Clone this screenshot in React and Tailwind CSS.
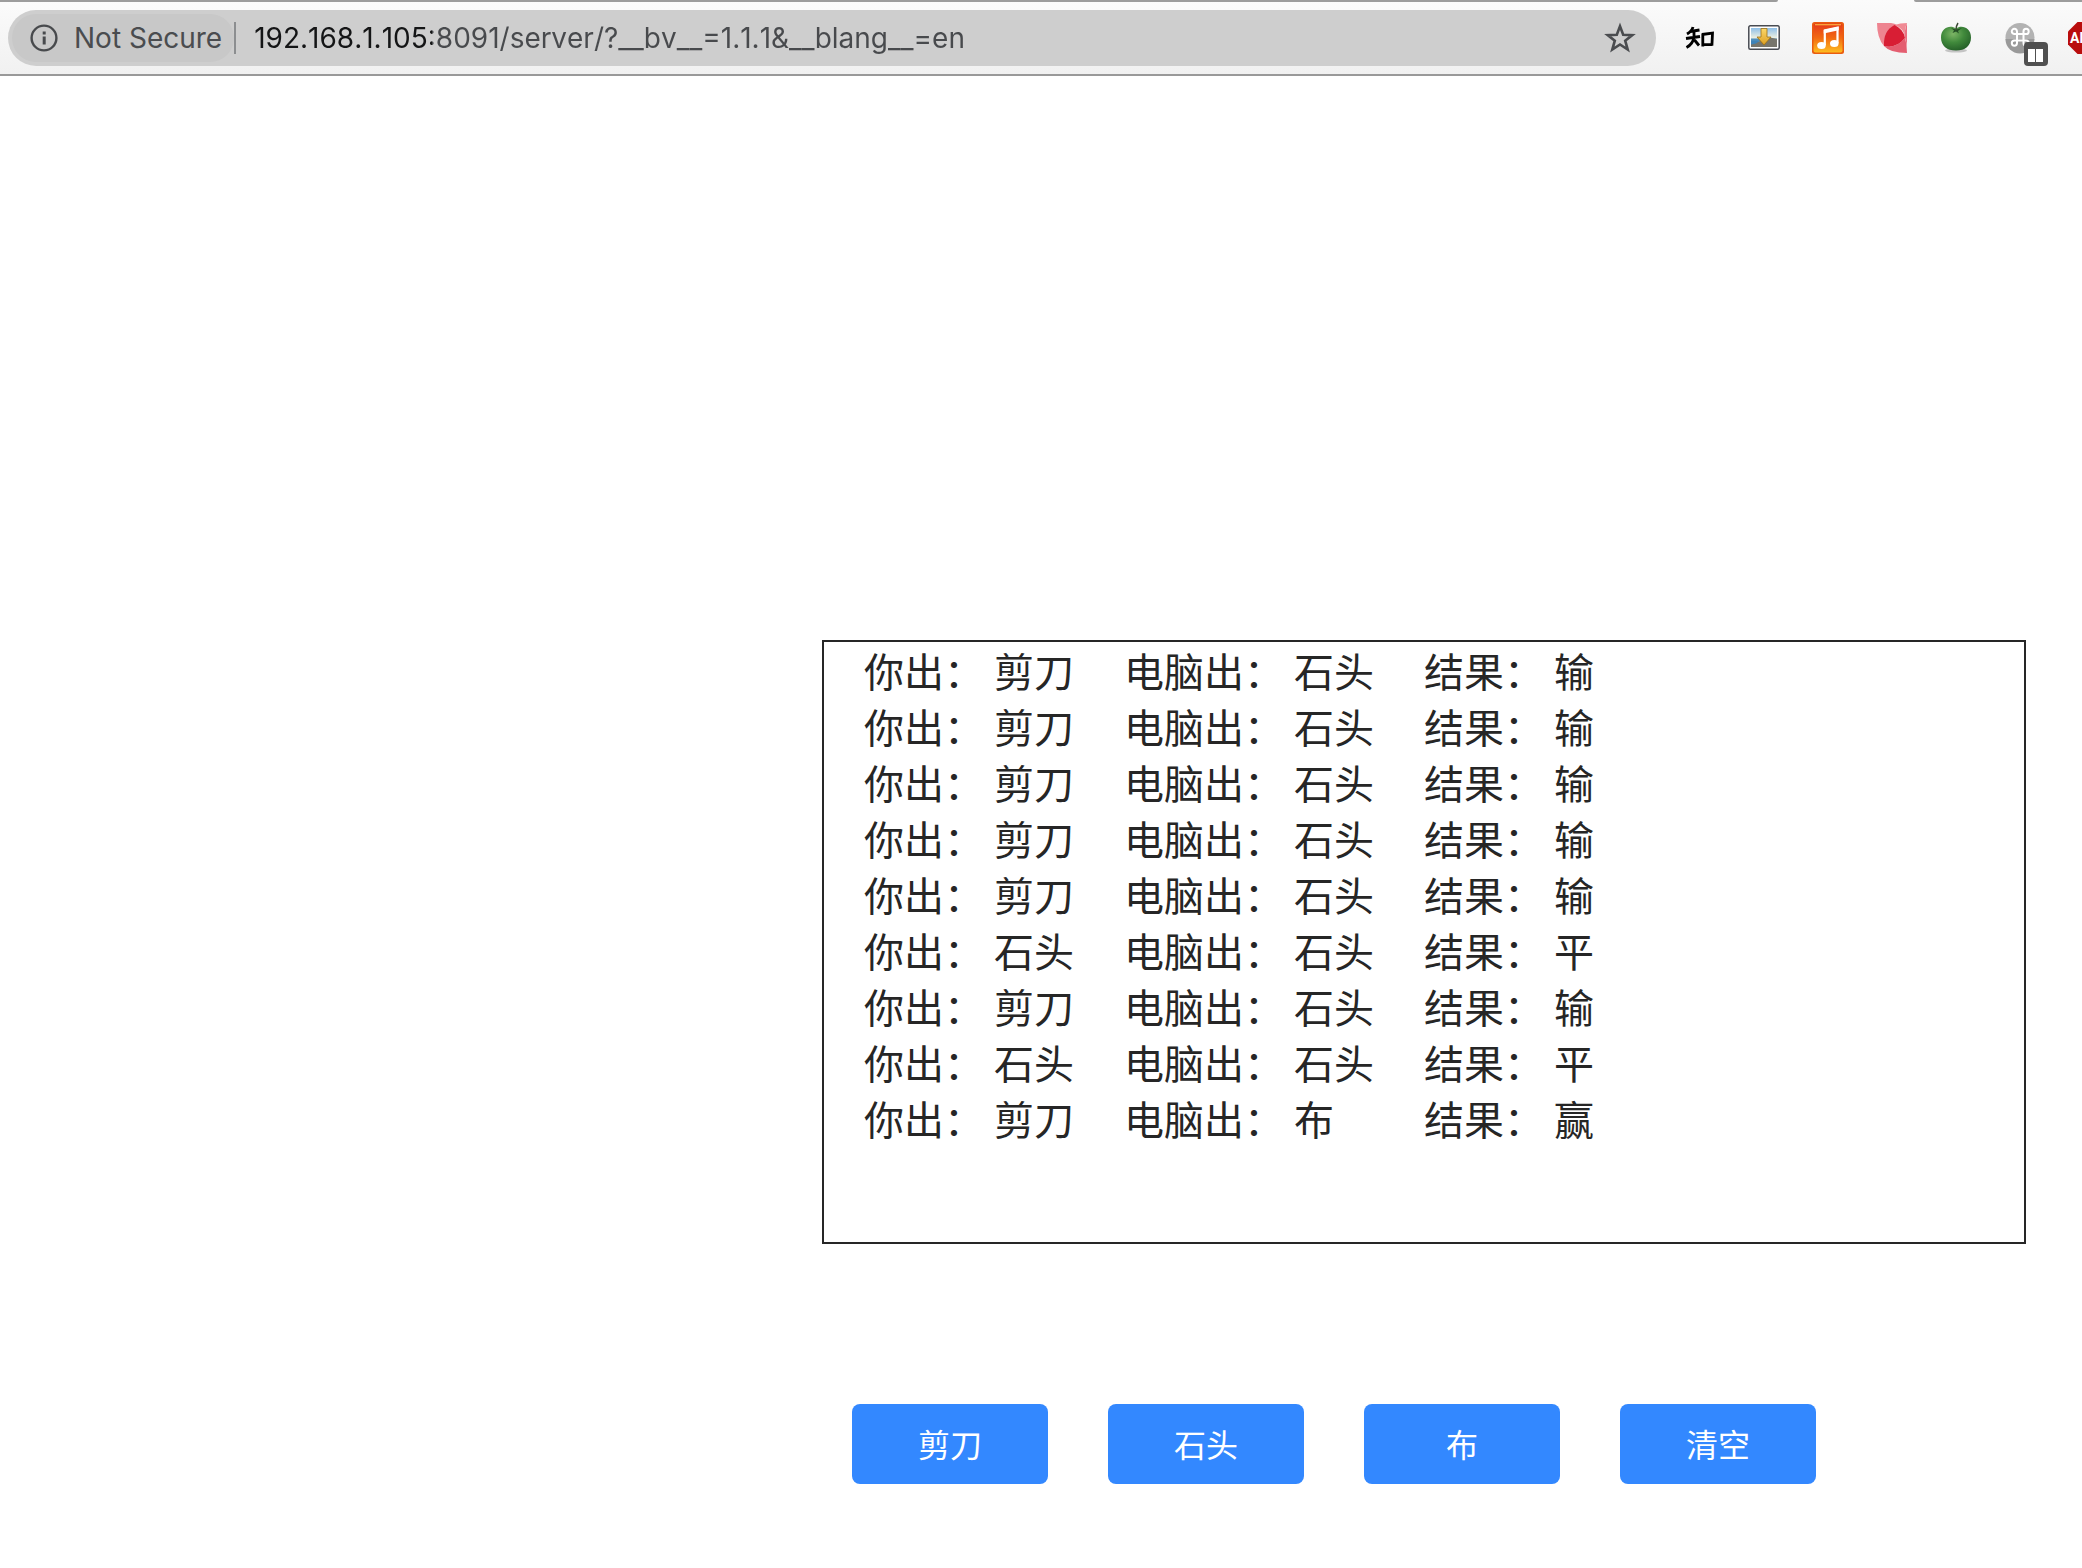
import React, { useState } from "react";

const START = [
  ["剪刀", "石头", "输"],
  ["剪刀", "石头", "输"],
  ["剪刀", "石头", "输"],
  ["剪刀", "石头", "输"],
  ["剪刀", "石头", "输"],
  ["石头", "石头", "平"],
  ["剪刀", "石头", "输"],
  ["石头", "石头", "平"],
  ["剪刀", "布", "赢"],
];
const MOVES = ["剪刀", "石头", "布"];

function judge(mine, other) {
  const d = (MOVES.indexOf(mine) - MOVES.indexOf(other) + 3) % 3;
  return d === 0 ? "平" : d === 1 ? "赢" : "输";
}

function InfoIcon() {
  return (
    <svg className="h-7 w-7 shrink-0" viewBox="0 0 28 28" aria-hidden="true">
      <circle cx="14" cy="14" r="12.4" fill="none" stroke="#484a4d" strokeWidth="2.4" />
      <path d="M12.7 7.5h3v3h-3zM12.7 12.6h3v8h-3z" fill="#484a4d" />
    </svg>
  );
}

function StarIcon() {
  return (
    <svg className="h-8 w-8" viewBox="0 0 32 32" aria-hidden="true">
      <path
        d="M16 4.2l3.2 8.5 9.1.4-7.1 5.6 2.5 8.9L16 22.5l-7.7 5.1 2.5-8.9-7.1-5.6 9.1-.4z"
        fill="none"
        stroke="#4a4c4f"
        strokeWidth="2.6"
      />
    </svg>
  );
}

function ZhiIcon() {
  return (
    <svg className="h-8 w-8" viewBox="0 0 32 32" aria-hidden="true">
      <g fill="none" stroke="#000" strokeWidth="2.8">
        <path d="M9 5Q8 9 3 12M6.500 9.500L15.500 8M2 16.500L16 14.500M10 9v6Q9 22 2.500 25.500M10.500 18L15 23.500" />
        <path d="M18.800 11.500v13M18 12.500l10.500-1.300-.6 12.500M18.500 22.600h9.500" />
      </g>
    </svg>
  );
}

function PictureIcon() {
  return (
    <svg className="h-8 w-8" viewBox="0 0 32 32" aria-hidden="true">
      <defs>
        <linearGradient id="sky" x2="0" y2="1">
          <stop offset="0" stopColor="#8fbfe8" />
          <stop offset=".5" stopColor="#e9eee2" />
          <stop offset=".6" stopColor="#4f8fbd" />
          <stop offset="1" stopColor="#80a9c4" />
        </linearGradient>
        <linearGradient id="arrow" x2="0" y2="1">
          <stop offset="0" stopColor="#fbd768" />
          <stop offset="1" stopColor="#dc9f22" />
        </linearGradient>
      </defs>
      <rect x=".8" y="3.800" width="30.400" height="23.500" rx="1.500" fill="#fff" stroke="#484b52" strokeWidth="1.500" />
      <rect x="3" y="6" width="26" height="19" fill="url(#sky)" />
      <path d="M3 22l10-3 7-4 9 2v8H3z" fill="#77756c" />
      <path d="M3 18.500h9l-4 3-5 1z" fill="#3f83b8" />
      <path d="M13 6.500h6V15h4L16 23 9 15h4z" fill="url(#arrow)" stroke="#9a6f16" strokeWidth=".8" />
    </svg>
  );
}

function MusicIcon() {
  return (
    <svg className="h-8 w-8" viewBox="0 0 32 32" aria-hidden="true">
      <defs>
        <linearGradient id="music" x2="0" y2="1">
          <stop offset="0" stopColor="#e5381a" />
          <stop offset=".5" stopColor="#f26a12" />
          <stop offset="1" stopColor="#fdbd20" />
        </linearGradient>
      </defs>
      <rect width="32" height="32" rx="2.500" fill="#ea5c10" />
      <rect x="1.500" y="1.500" width="29" height="29" rx="2" fill="url(#music)" />
      <path d="M3 2.700h26" stroke="#fbb040" strokeWidth="1.200" />
      <path d="M12.800 23V8.800L25.500 6v15" fill="none" stroke="#fff" strokeWidth="2.200" />
      <path d="M11.700 7.500l15-3.200v4l-15 3.200z" fill="#fff" />
      <ellipse cx="9.500" cy="23.500" rx="4.300" ry="3.500" fill="#fff" />
      <ellipse cx="22.300" cy="21.500" rx="4.300" ry="3.500" fill="#fff" />
    </svg>
  );
}

function PetalIcon() {
  return (
    <svg className="h-8 w-8" viewBox="0 0 32 32" aria-hidden="true">
      <path d="M1 1h14q4 .5 6 2Q8 9 8 24Q1 16 1 1z" fill="#ee8490" />
      <path d="M31 31Q14 31 8 24q12 3 21-8 1.500 5 2 15z" fill="#e45e70" />
      <path d="M31 1Q28 8 29 16Q28 6 18.500 3Q24 1 31 1z" fill="#f08a94" />
      <path d="M31 1v30Q31 21 29 16Q28 9 31 1z" fill="#ea7080" />
      <path d="M8 24Q7 9 18.500 3Q27.500 7 29 16Q20 27 8 24z" fill="#d81e34" />
    </svg>
  );
}

function TomatoIcon() {
  return (
    <svg className="h-8 w-8" viewBox="0 0 32 32" aria-hidden="true">
      <defs>
        <radialGradient id="tomato" cx=".4" cy=".3" r=".8">
          <stop offset="0" stopColor="#7db566" />
          <stop offset=".45" stopColor="#418a3c" />
          <stop offset="1" stopColor="#1f5724" />
        </radialGradient>
      </defs>
      <ellipse cx="16" cy="28.500" rx="11" ry="2" fill="#c4c4c4" />
      <path d="M16 6.500C22 2.500 31 6 31 15.500C31 24 25 28.500 16 28.500S1 24 1 15.500C1 6 10 2.500 16 6.500z" fill="url(#tomato)" />
      <path d="M11 6l5 1.500L22 6l-4 3 1 2.500-3-2-3.500 1.500 1.500-2.500z" fill="#244f25" />
      <path d="M16 8q0-4 2-7" fill="none" stroke="#3b4a34" strokeWidth="1.500" />
    </svg>
  );
}

function CommandIcon() {
  return (
    <svg className="h-8 w-8" viewBox="0 0 32 32" aria-hidden="true">
      <circle cx="16" cy="15.500" r="14.500" fill="#b2b2b2" />
      <path d="M1.500 17h29A14.500 14.500 0 0 1 1.500 17z" fill="#999" />
      <path
        d="M13 12h6.500v6.500H13zM13 12h-2.500a2.600 2.600 0 1 1 2.500-2.600zM19.500 12V9.400a2.600 2.600 0 1 1 2.600 2.600zM13 18.500v2.600a2.600 2.600 0 1 1-2.600-2.600zM19.500 18.500h2.600a2.600 2.600 0 1 1-2.600 2.600z"
        fill="none"
        stroke="#fff"
        strokeWidth="2"
      />
    </svg>
  );
}

function Extension({ label, children }) {
  return (
    <button type="button" aria-label={label} className="relative h-8 w-8 shrink-0">
      {children}
    </button>
  );
}

function Toolbar() {
  const [url, setUrl] = useState("192.168.1.105:8091/server/?__bv__=1.1.1&__blang__=en");
  return (
    <header className="overflow-hidden border-b-2 border-[#999] bg-linear-to-b from-[#fbfbfb] to-[#f1f1f1] font-['Inter',sans-serif]">
      <div className="flex h-0.5 justify-between">
        <div className="grow rounded-br bg-[#9c9c9c]" />
        <div className="w-[136px]" />
        <div className="w-[168px] rounded-bl bg-[#9c9c9c]" />
      </div>
      <div className="flex h-18 items-center pl-2">
        <div className="flex h-14 min-w-0 grow items-center rounded-full bg-[#cecece] pr-5 pl-1">
          <button
            type="button"
            className="flex h-12 shrink-0 items-center gap-4 rounded-full bg-[#c8c8c8] pr-3 pl-[18px] text-[28px] text-[#4a4c4f]"
          >
            <InfoIcon />
            Not Secure
          </button>
          <div className="h-8 w-0.5 shrink-0 bg-[#8c8e90]" />
          <input
            aria-label="Address"
            value={url}
            onChange={(e) => setUrl(e.target.value)}
            className="ml-[18px] h-12 min-w-0 grow bg-[linear-gradient(90deg,#141516_178px,#484a4d_178px)] bg-clip-text text-[28px] text-transparent outline-none [font-kerning:none]"
          />
          <button type="button" aria-label="Bookmark this page" className="shrink-0">
            <StarIcon />
          </button>
        </div>
        <div className="ml-7 flex shrink-0 items-center gap-8">
          <Extension label="Zhihu"><ZhiIcon /></Extension>
          <Extension label="Image downloader"><PictureIcon /></Extension>
          <Extension label="Music"><MusicIcon /></Extension>
          <Extension label="Petals"><PetalIcon /></Extension>
          <Extension label="Tomato timer"><TomatoIcon /></Extension>
          <Extension label="Shortcuts">
            <CommandIcon />
            <svg className="absolute top-5 left-5 h-6 w-6" viewBox="0 0 24 24" aria-hidden="true">
              <rect width="24" height="24" rx="4" fill="#505050" />
              <path d="M4 7h7v13H4zM12 7h7v13h-7z" fill="#fff" />
            </svg>
          </Extension>
          <div className="w-[14px] overflow-hidden">
            <button type="button" className="block h-8 w-8" aria-label="Ad blocker">
              <svg className="h-8 w-8" viewBox="0 0 32 32" aria-hidden="true">
                <path d="M9.500 0h13L32 9.500v13L22.500 32h-13L0 22.500v-13z" fill="#b90d0d" />
                <text x="2" y="21" fontSize="14" fontWeight="700" fill="#fff" fontFamily="Roboto, sans-serif">ABP</text>
              </svg>
            </button>
          </div>
        </div>
      </div>
    </header>
  );
}

function Entry({ label, value }) {
  return (
    <span className="flex gap-[10px]">
      <span>{label}：</span>
      <span>{value}</span>
    </span>
  );
}

export default function App() {
  const [log, setLog] = useState(START);
  const play = (mine) => {
    const other = MOVES[Math.floor(Math.random() * 3)];
    setLog([...log, [mine, other, judge(mine, other)]]);
  };
  const button =
    "h-20 w-[196px] cursor-pointer rounded-lg bg-[#3388ff] pb-0.5 text-[32px] text-white hover:bg-[#1f78f5]";
  return (
    <div className="min-h-screen bg-white">
      <Toolbar />
      <main className="pt-[564px] pr-14 font-['Noto_Sans_CJK_SC',sans-serif]">
        <div className="ml-auto w-full max-w-[1204px]">
          <ol className="min-h-[604px] border-2 border-[#262626] px-10 text-[40px] leading-[56px] text-[#262626]">
            {log.map(([mine, other, result], i) => (
              <li key={i} className="grid grid-cols-[260px_300px_1fr]">
                <Entry label="你出" value={mine} />
                <Entry label="电脑出" value={other} />
                <Entry label="结果" value={result} />
              </li>
            ))}
          </ol>
          <div className="mt-40 flex gap-15 pl-[30px]">
            {MOVES.map((move) => (
              <button key={move} type="button" className={button} onClick={() => play(move)}>
                {move}
              </button>
            ))}
            <button type="button" className={button} onClick={() => setLog([])}>
              清空
            </button>
          </div>
        </div>
      </main>
    </div>
  );
}
